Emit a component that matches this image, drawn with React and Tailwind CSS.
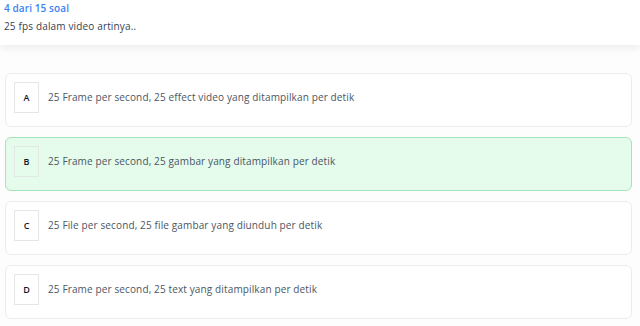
import React from "react";

const options = [
  { k: "A", t: "25 Frame per second, 25 effect video yang ditampilkan per detik" },
  { k: "B", t: "25 Frame per second, 25 gambar yang ditampilkan per detik", sel: true },
  { k: "C", t: "25 File per second, 25 file gambar yang diunduh per detik" },
  { k: "D", t: "25 Frame per second, 25 text yang ditampilkan per detik" },
];

export default function App() {
  return (
    <div className="w-[640px] h-[326px] bg-[#fdfdfd] overflow-hidden" style={{ fontFamily: "'Open Sans', 'Noto Sans', sans-serif" }}>
      <div className="h-[45px] bg-white px-[4px] pt-[1px] shadow-[0_3px_8px_rgba(0,0,0,0.07)] relative z-10">
        <div className="text-[10px] leading-[14px] font-semibold text-[#3b82f6] tracking-[0.1px]">4 dari 15 soal</div>
        <div className="mt-[4px] text-[10px] leading-[14px] text-[#374151] tracking-[0.15px]">25 fps dalam video artinya..</div>
      </div>
      <div className="flex flex-col gap-[10px] pl-[5px] pr-[8px] pt-[28px]">
        {options.map((o) => (
          <div
            key={o.k}
            className={
              o.sel
                ? "h-[54px] rounded-[6px] border border-[#a6e3b8] bg-[#e5fbeb] flex items-start pl-[8px] pt-[8px]"
                : "h-[54px] rounded-[6px] border border-[#ebebeb] bg-white flex items-start pl-[8px] pt-[8px]"
            }
          >
            <div
              className={
                o.sel
                  ? "w-[25px] h-[31px] border border-[#e2e8e4] flex items-center justify-center text-[9px] font-semibold text-[#111827]"
                  : "w-[25px] h-[31px] border border-[#e5e5e5] bg-white flex items-center justify-center text-[9px] font-semibold text-[#111827]"
              }
            >
              {o.k}
            </div>
            <div className="ml-[9px] h-[31px] flex items-center text-[10px] text-[#4b5563] tracking-[0.13px]">{o.t}</div>
          </div>
        ))}
      </div>
    </div>
  );
}
